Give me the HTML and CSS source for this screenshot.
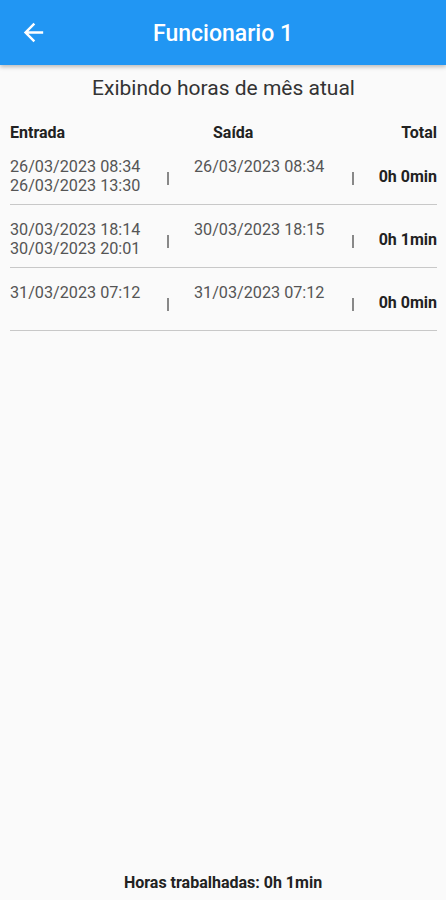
FILE: index.html
```html
<!DOCTYPE html>
<html lang="pt-BR">
<head>
  <meta charset="UTF-8" />
  <meta name="viewport" content="width=device-width, initial-scale=1.0"/>
  <title>Funcionario 1</title>
  <link rel="stylesheet" href="styles.css">
</head>

<body>
  <div class="screen">
    <header class="appbar">
      <button class="back" aria-label="Voltar">
        <svg viewBox="0 0 24 24" width="29" height="29"><path fill="#fff" d="M20 11H7.83l5.59-5.59L12 4l-8 8 8 8 1.41-1.41L7.83 13H20v-2z"/></svg>
      </button>
      <h1>Funcionario 1</h1>
      <span></span>
    </header>

    <main class="content">
      <p class="subtitle">Exibindo horas de mês atual</p>

      <div class="table-head">
        <span>Entrada</span>
        <span>Saída</span>
        <span>Total</span>
      </div>

      <!-- Registros -->
      <div class="entry">
        <div class="times">26/03/2023 08:34<br>26/03/2023 13:30</div>
        <span class="sep"></span>
        <div class="times">26/03/2023 08:34</div>
        <span class="sep"></span>
        <div class="total">0h 0min</div>
      </div>

      <div class="entry">
        <div class="times">30/03/2023 18:14<br>30/03/2023 20:01</div>
        <span class="sep"></span>
        <div class="times">30/03/2023 18:15</div>
        <span class="sep"></span>
        <div class="total">0h 1min</div>
      </div>

      <div class="entry">
        <div class="times">31/03/2023 07:12</div>
        <span class="sep"></span>
        <div class="times">31/03/2023 07:12</div>
        <span class="sep"></span>
        <div class="total">0h 0min</div>
      </div>
    </main>

    <footer class="summary">Horas trabalhadas: 0h 1min</footer>
  </div>
</body>
</html>
```

FILE: styles.css
```css
* {
  margin: 0;
  padding: 0;
  box-sizing: border-box;
}

body {
  font-family: 'Roboto', 'Liberation Sans', sans-serif;
  background-color: #fafafa;
  color: #222;
}

.screen {
  height: 100vh;
  display: flex;
  flex-direction: column;
}

.appbar {
  height: 65px;
  flex-shrink: 0;
  background-color: #2196f3;
  display: grid;
  grid-template-columns: 56px 1fr 56px;
  align-items: center;
  box-shadow: 0 2px 4px rgba(0, 0, 0, 0.25);
}

.back {
  background: none;
  border: none;
  display: flex;
  align-items: center;
  padding-left: 19px;
}

.appbar h1 {
  text-align: center;
  color: #fff;
  font-size: 23px;
  font-weight: 500;
  line-height: 27px;
  padding-top: 2px;
}

.content {
  flex: 1;
  padding: 0 9px 0 10px;
}

.subtitle {
  text-align: center;
  font-size: 21px;
  line-height: 24px;
  color: #333;
  margin-top: 11px;
}

.table-head {
  display: flex;
  justify-content: space-between;
  font-size: 16px;
  font-weight: 700;
  line-height: 19px;
  margin-top: 23px;
  margin-bottom: 15px;
}

.entry {
  display: grid;
  grid-template-columns: 156px 28px 157px 10px 1fr;
  align-items: center;
  padding: 0 0 9px;
  border-bottom: 1.5px solid #c8c8c8;
}

.entry + .entry {
  padding-top: 15px;
}

.times {
  align-self: start;
  font-size: 16.2px;
  line-height: 19px;
  color: #555;
  min-height: 38px;
}

.sep {
  width: 1.5px;
  height: 13px;
  margin-left: 1px;
  margin-top: 5px;
  background-color: #888;
}

.total {
  text-align: right;
  font-size: 16px;
  font-weight: 700;
  color: #222;
  padding-top: 1px;
}

.summary {
  text-align: center;
  font-size: 16px;
  font-weight: 700;
  line-height: 19px;
  padding-bottom: 8px;
}
```
